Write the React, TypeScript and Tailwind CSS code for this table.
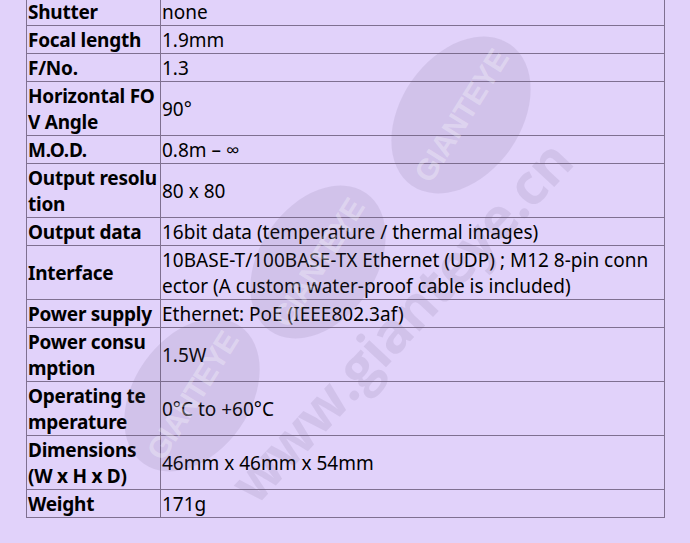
const rows: [string, string][] = [
  ["Shutter", "none"],
  ["Focal length", "1.9mm"],
  ["F/No.", "1.3"],
  ["Horizontal FOV Angle", "90°"],
  ["M.O.D.", "0.8m – ∞"],
  ["Output resolution", "80 x 80"],
  ["Output data", "16bit data (temperature / thermal images)"],
  ["Interface", "10BASE-T/100BASE-TX Ethernet (UDP) ; M12 8-pin connector (A custom water-proof cable is included)"],
  ["Power supply", "Ethernet: PoE (IEEE802.3af)"],
  ["Power consumption", "1.5W"],
  ["Operating temperature", "0°C to +60°C"],
  ["Dimensions (W x H x D)", "46mm x 46mm x 54mm"],
  ["Weight", "171g"],
];

function Watermark() {
  return (
    <svg className="pointer-events-none absolute inset-0" width="690" height="543" viewBox="0 0 690 543">
      <g fill="#6b5a80" fillOpacity="0.13">
        <ellipse cx="461" cy="115" rx="60" ry="86" transform="rotate(35 461 115)" />
        <ellipse cx="318" cy="262" rx="58" ry="84" transform="rotate(35 318 262)" />
        <ellipse cx="192" cy="395" rx="58" ry="84" transform="rotate(35 192 395)" />
      </g>
      <g fill="#ffffff" fillOpacity="0.3" fontFamily="'Liberation Sans', sans-serif" fontWeight="700" fontSize="30">
        <text x="461" y="126" textAnchor="middle" transform="rotate(-58 461 115)" textLength="150">GIANTEYE</text>
        <text x="318" y="273" textAnchor="middle" transform="rotate(-58 318 262)" textLength="145">GIANTEYE</text>
        <text x="192" y="406" textAnchor="middle" transform="rotate(-58 192 395)" textLength="145">GIANTEYE</text>
      </g>
      <text
        x="405"
        y="340"
        textAnchor="middle"
        transform="rotate(-47 405 325)"
        fill="#6b5a80"
        fillOpacity="0.13"
        fontFamily="'Open Sans', sans-serif"
        fontWeight="700"
        fontSize="56"
        textLength="470"
      >
        www.gianteye.cn
      </text>
    </svg>
  );
}

export default function App() {
  return (
    <div className="relative h-[543px] w-[690px] overflow-hidden bg-[#e1d2fa] font-['Noto_Sans','Open_Sans',sans-serif] text-[19px] leading-[26px] text-black">
      <table className="ml-[26px] -mt-[3px] w-[639px] border-collapse">
        <tbody>
          {rows.map(([label, value]) => (
            <tr key={label}>
              <td className="w-[134px] border border-[#7f7090] px-px pt-px align-middle font-bold tracking-[-0.25px] break-all">
                {label}
              </td>
              <td className="border border-[#7f7090] pl-px pr-[8px] pt-px align-middle break-all">{value}</td>
            </tr>
          ))}
        </tbody>
      </table>
      <Watermark />
    </div>
  );
}
